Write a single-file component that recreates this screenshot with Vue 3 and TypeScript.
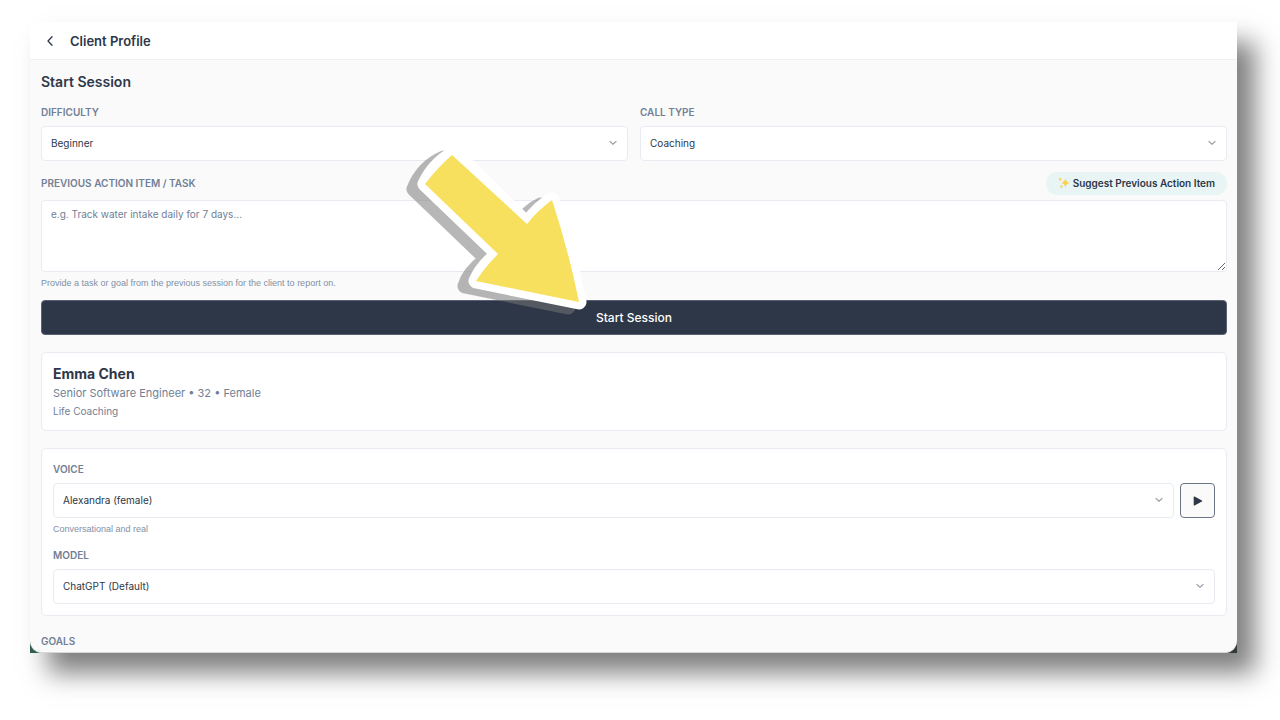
<script setup lang="ts">
import { ref } from 'vue'

const difficulties = ['Beginner', 'Intermediate', 'Advanced']
const callTypes = ['Coaching', 'Discovery']
const voices = ['Alexandra (female)']
const models = ['ChatGPT (Default)']

const difficulty = ref('Beginner')
const callType = ref('Coaching')
const voice = ref('Alexandra (female)')
const model = ref('ChatGPT (Default)')
const task = ref('')
</script>

<template>
  <div class="stage">
    <div class="frame">
      <div class="app">
        <header class="topbar">
          <button class="back" type="button" aria-label="Back">
            <svg viewBox="0 0 8 12" width="8" height="12"><path d="M6 1.8 2 6l4 4.2" /></svg>
          </button>
          <h1>Client Profile</h1>
        </header>

        <main class="content">
          <h2>Start Session</h2>

          <div class="columns">
            <div class="field">
              <label for="difficulty">DIFFICULTY</label>
              <div class="select">
                <select id="difficulty" v-model="difficulty">
                  <option v-for="d in difficulties" :key="d">{{ d }}</option>
                </select>
                <svg class="chevron" viewBox="0 0 8 6" width="8" height="6"><path d="M1 1.5 4 4.3l3-2.8" /></svg>
              </div>
            </div>
            <div class="field">
              <label for="call-type">CALL TYPE</label>
              <div class="select">
                <select id="call-type" v-model="callType">
                  <option v-for="c in callTypes" :key="c">{{ c }}</option>
                </select>
                <svg class="chevron" viewBox="0 0 8 6" width="8" height="6"><path d="M1 1.5 4 4.3l3-2.8" /></svg>
              </div>
            </div>
          </div>

          <div class="task-head">
            <label for="task">PREVIOUS ACTION ITEM / TASK</label>
            <button class="suggest" type="button">
              <svg viewBox="0 0 12 12" width="12" height="12">
                <path d="M7.3 1.6Q7.9 5 11.6 5.9 7.9 6.8 7.3 10.4 6.7 6.8 3.2 5.9 6.7 5 7.3 1.6Z" />
                <path d="M2.1.3Q2.4 1.9 3.9 2.3 2.4 2.7 2.1 4.2 1.8 2.7.3 2.3 1.8 1.9 2.1.3Z" />
                <path d="M3.3 7.8Q3.6 9.3 5 9.6 3.6 9.9 3.3 11.5 3 9.9 1.6 9.6 3 9.3 3.3 7.8Z" />
              </svg>
              <span>Suggest Previous Action Item</span>
            </button>
          </div>
          <textarea id="task" v-model="task" placeholder="e.g. Track water intake daily for 7 days..."></textarea>
          <p class="hint">Provide a task or goal from the previous session for the client to report on.</p>

          <div class="start-wrap">
            <button class="start" type="button">Start Session</button>
            <svg class="pointer" viewBox="400 140 200 180" width="200" height="180" aria-hidden="true">
              <path class="shade" transform="translate(-11 5)" d="M455 153 Q434 162 425 184 L498 254 Q480 267 476 281 L579 302 Q569 252 552 200 Q538 206 527 224 Z" />
              <path class="arrow" d="M455 153 Q435 163 425 184 L498 254 Q482 267 476 281 L579 302 Q569 252 552 200 Q538 208 527 224 Z" />
              <path class="fill" d="M452 155 Q438 167 425 184 L498 254 Q485 267 476 281 L579 302 Q569 252 552 200 Q538 210 527 224 Z" />
            </svg>
          </div>

          <section class="card person">
            <h3>Emma Chen</h3>
            <p class="role">Senior Software Engineer • 32 • Female</p>
            <p class="kind">Life Coaching</p>
          </section>

          <section class="card settings">
            <label for="voice">VOICE</label>
            <div class="voice-row">
              <div class="select">
                <select id="voice" v-model="voice">
                  <option v-for="v in voices" :key="v">{{ v }}</option>
                </select>
                <svg class="chevron" viewBox="0 0 8 6" width="8" height="6"><path d="M1 1.5 4 4.3l3-2.8" /></svg>
              </div>
              <button class="play" type="button" aria-label="Play voice">
                <svg viewBox="0 0 10 10" width="10" height="10"><path d="M1.3 1.1v7.8L8.6 5z" /></svg>
              </button>
            </div>
            <p class="hint">Conversational and real</p>
            <label class="model-label" for="model">MODEL</label>
            <div class="select">
              <select id="model" v-model="model">
                <option v-for="m in models" :key="m">{{ m }}</option>
              </select>
              <svg class="chevron" viewBox="0 0 8 6" width="8" height="6"><path d="M1 1.5 4 4.3l3-2.8" /></svg>
            </div>
          </section>

          <h4>GOALS</h4>
        </main>
      </div>
    </div>
  </div>
</template>

<style>
body {
  margin: 0;
  background: #fff;
}
</style>

<style scoped>
* {
  box-sizing: border-box;
}
.stage {
  padding: 22px 43px 60px 30px;
  overflow: hidden;
  font-family: Inter, "Liberation Sans", sans-serif;
  color: #2d3748;
}
.frame {
  background: linear-gradient(90deg, #2f5d50, #333b36);
  box-shadow: 18px 20px 24px rgba(0, 0, 0, 0.5);
}
.app {
  background: #fafafa;
  border-radius: 0 0 12px 12px;
  border-bottom: 1px solid #d5d7da;
}
h1, h2, h3, h4, p {
  margin: 0;
}
button, select, textarea {
  font-family: inherit;
  color: inherit;
}
.topbar {
  display: flex;
  align-items: center;
  height: 38px;
  padding-left: 12px;
  gap: 12px;
  background: #fff;
  border-bottom: 1px solid #edf0f4;
}
.back {
  display: flex;
  align-items: center;
  justify-content: center;
  width: 16px;
  height: 24px;
  padding: 0;
  border: 0;
  background: none;
}
.back svg, .chevron {
  fill: none;
  stroke: currentColor;
  stroke-width: 1.3;
  stroke-linecap: round;
  stroke-linejoin: round;
}
h1 {
  font-size: 13px;
  line-height: 20px;
  font-weight: 600;
}
.content {
  padding: 12px 10px 3px 11px;
}
h2 {
  font-size: 14px;
  line-height: 20px;
  font-weight: 600;
}
.columns {
  display: grid;
  grid-template-columns: 1fr 1fr;
  gap: 12px;
  margin-top: 13px;
}
label, h4 {
  display: block;
  font-size: 10px;
  line-height: 15px;
  font-weight: 600;
  color: #718096;
}
.select {
  position: relative;
  flex: 1;
}
.field .select {
  margin-top: 6px;
}
select {
  display: block;
  width: 100%;
  height: 35px;
  padding: 0 28px 2px 9px;
  appearance: none;
  font-size: 10px;
  background: #fff;
  border: 1px solid #e8ecf2;
  border-radius: 4px;
}
.chevron {
  position: absolute;
  right: 11px;
  top: 14px;
  color: #a3a7ad;
  pointer-events: none;
}
.task-head {
  display: flex;
  align-items: center;
  justify-content: space-between;
  margin-top: 11px;
}
.suggest {
  display: flex;
  align-items: center;
  gap: 3px;
  height: 23px;
  padding: 0 12px 1px;
  border: 0;
  border-radius: 12px;
  background: #e8f5f4;
  font-size: 10px;
  font-weight: 600;
}
.suggest svg {
  fill: #fbd04a;
}
textarea {
  display: block;
  width: 100%;
  height: 72px;
  margin-top: 5px;
  padding: 6px 9px;
  font-size: 10px;
  line-height: 15px;
  background: #fff;
  border: 1px solid #e8ecf2;
  border-radius: 4px;
  resize: vertical;
}
textarea::placeholder {
  color: #718096;
}
.hint {
  margin-top: 4px;
  font-family: "Liberation Sans", Arial, sans-serif;
  font-size: 9px;
  line-height: 14px;
  color: #8190a6;
}
.start-wrap {
  position: relative;
  margin-top: 10px;
}
.start {
  display: block;
  width: 100%;
  height: 35px;
  padding: 0 0 1px;
  border: 1px solid #596273;
  border-radius: 4px;
  background: #2d3748;
  color: #fff;
  font-size: 12px;
  font-weight: 500;
}
.pointer {
  position: absolute;
  left: 50%;
  bottom: 15px;
  margin-left: -234px;
  pointer-events: none;
}
.pointer path {
  stroke-width: 15;
  stroke-linejoin: round;
}
.shade {
  fill: #787878;
  stroke: #787878;
  opacity: 0.53;
}
.arrow {
  fill: #fff;
  stroke: #fff;
}
.fill {
  fill: #f7e05e;
}
.card {
  margin-top: 17px;
  padding: 11px;
  background: #fff;
  border: 1px solid #e8ecf2;
  border-radius: 5px;
}
h3 {
  font-size: 14px;
  line-height: 20px;
  font-weight: 700;
}
.role {
  font-size: 11px;
  line-height: 18px;
  color: #718096;
}
.kind {
  margin-top: 1px;
  font-size: 10px;
  line-height: 16px;
  color: #718096;
}
.settings {
  padding-top: 13px;
}
.voice-row {
  display: flex;
  gap: 6px;
  margin-top: 6px;
}
.play {
  display: flex;
  align-items: center;
  justify-content: center;
  width: 35px;
  height: 35px;
  padding: 0;
  border: 1px solid #6b7485;
  border-radius: 4px;
  background: #fafafa;
}
.play svg {
  fill: currentColor;
  stroke: currentColor;
  stroke-width: 1.2;
  stroke-linejoin: round;
}
.model-label {
  margin: 12px 0 6px;
}
h4 {
  margin-top: 18px;
}
</style>
